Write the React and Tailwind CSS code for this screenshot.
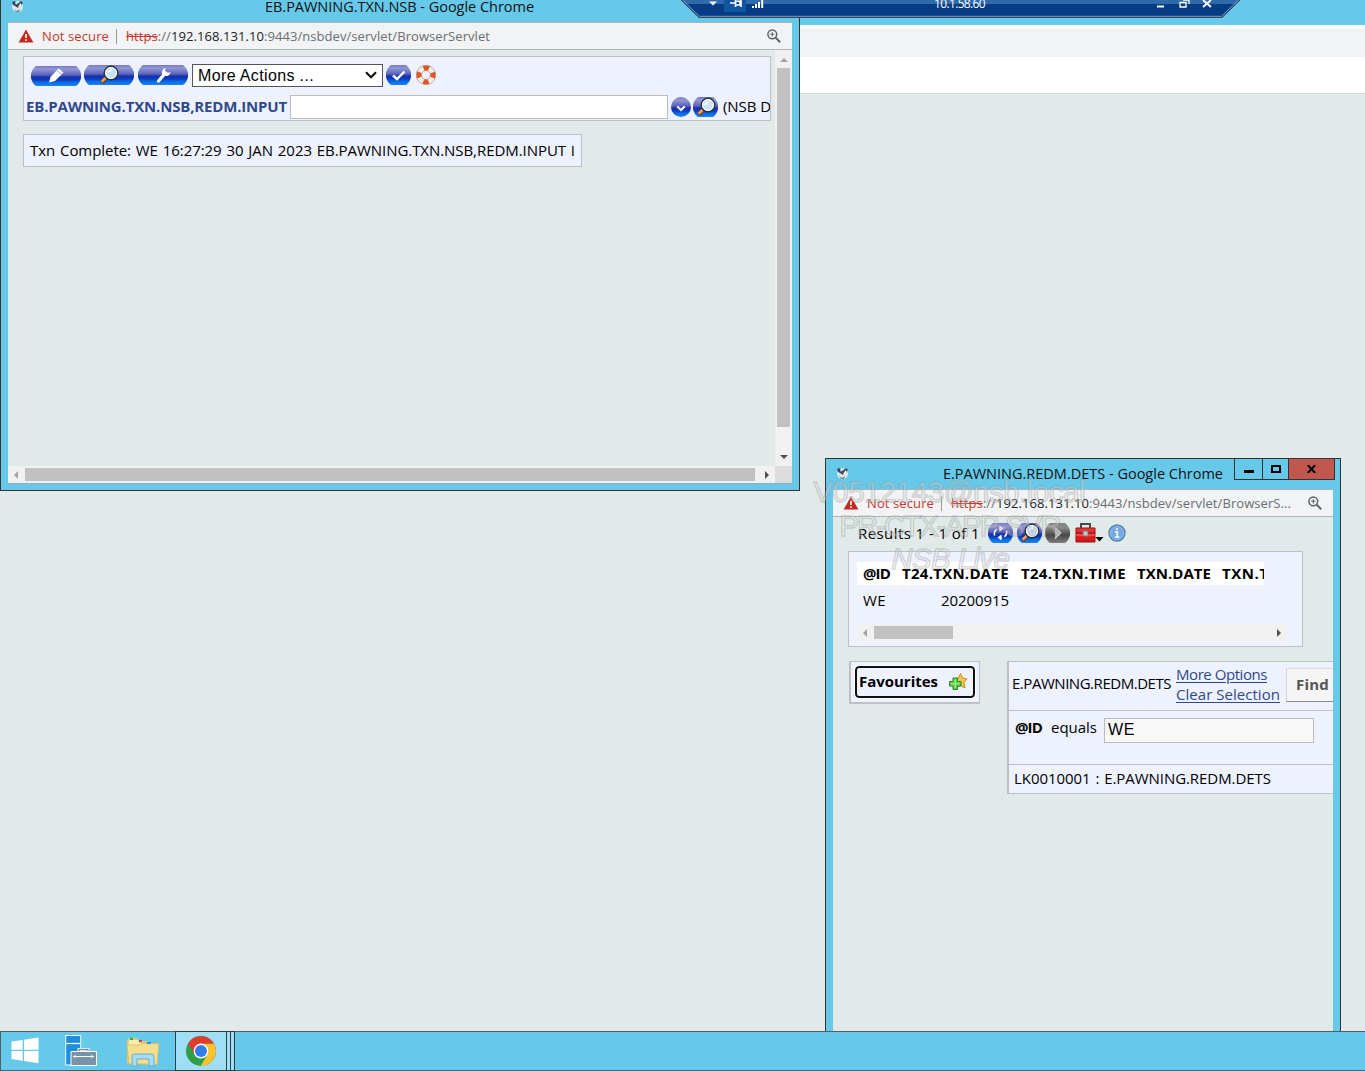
import { useLayoutEffect, useRef } from "react";

const UI = "font-['Open_Sans',sans-serif]";
const PAGE = "font-['Open_Sans','Noto_Sans',sans-serif]";

/* One line of text whose tracking is adjusted so that it fills its box. */
function Fit({ className = "", children }) {
  const box = useRef(null);
  const run = useRef(null);
  useLayoutEffect(() => {
    const text = run.current;
    text.style.letterSpacing = "0px";
    const natural = text.getBoundingClientRect().width;
    const gap = box.current.getBoundingClientRect().width - natural;
    text.style.letterSpacing = gap / text.textContent.length + "px";
  }, []);
  return (
    <span ref={box} className={"block shrink-0 whitespace-nowrap " + className}>
      <span ref={run}>{children}</span>
    </span>
  );
}

function Defs() {
  return (
    <svg className="absolute h-0 w-0">
      <defs>
        <linearGradient id="pill" x1="0" y1="0" x2="0" y2="1">
          <stop offset="0" stopColor="#7478c4" />
          <stop offset=".15" stopColor="#9497d2" />
          <stop offset=".45" stopColor="#5a63bc" />
          <stop offset=".55" stopColor="#1a30a8" />
          <stop offset=".7" stopColor="#0a3cc0" />
          <stop offset=".8" stopColor="#0a66e4" />
          <stop offset="1" stopColor="#1787ee" />
        </linearGradient>
        <linearGradient id="greyPill" x1="0" y1="0" x2="0" y2="1">
          <stop offset="0" stopColor="#7d7d7d" />
          <stop offset=".2" stopColor="#8d8d8d" />
          <stop offset=".5" stopColor="#5c5c5c" />
          <stop offset=".6" stopColor="#464646" />
          <stop offset="1" stopColor="#808080" />
        </linearGradient>
        <linearGradient id="redBox" x1="0" y1="0" x2="0" y2="1">
          <stop offset="0" stopColor="#e83a3a" />
          <stop offset=".5" stopColor="#f02020" />
          <stop offset="1" stopColor="#c41515" />
        </linearGradient>
      </defs>
    </svg>
  );
}

function Pill({ w, fill = "url(#pill)", className = "", children }) {
  return (
    <svg width={w} height="20" viewBox={`0 0 ${w} 20`} className={"block shrink-0 " + className}>
      <path
        d={`M5 0H${w - 5}Q${w - 1} 3 ${w} 8V12Q${w - 1} 17 ${w - 5} 20H5Q1 17 0 12V8Q1 3 5 0Z`}
        fill={fill}
      />
      {children}
    </svg>
  );
}

function Lens({ x }) {
  return (
    <g transform={`translate(${x} 0)`}>
      <path d="M6 13L1.5 17.5" stroke="#7a3d18" strokeWidth="4.4" />
      <path d="M5.6 12.8L1.7 16.7" stroke="#f0a263" strokeWidth="2.6" />
      <circle cx="11" cy="8" r="6.8" fill="#c9e3f8" stroke="#26303c" strokeWidth="1.4" />
      <circle cx="11" cy="8" r="5.5" fill="none" stroke="#fff" strokeWidth="1" />
      <path d="M8 8Q9 5 12 5" stroke="#fff" strokeWidth="1.4" fill="none" />
    </g>
  );
}

function Lifebuoy() {
  return (
    <svg width="20" height="20" viewBox="0 0 20 20" className="relative -top-px ml-[5px] block shrink-0">
      <circle cx="10" cy="10" r="7" fill="none" stroke="#8f8783" strokeWidth="6" />
      <circle cx="10" cy="10" r="7" fill="none" stroke="#f3eeea" strokeWidth="4.8" />
      <circle cx="10" cy="10" r="7" fill="none" stroke="#e2561f" strokeWidth="5" strokeDasharray="5.4 5.596" strokeDashoffset="2.7" />
    </svg>
  );
}

function AppGlyph({ className = "" }) {
  return (
    <svg width="13" height="13" viewBox="0 0 13 13" className={"block shrink-0 " + className}>
      <circle cx="6.5" cy="6.5" r="5.5" fill="#dfe7ec" />
      <path d="M1 2L4 1L6 4L10 1L12 3L10 6L8 5L7 8L4 6L2 5Z" fill="#33495e" />
      <path d="M4 2L6 3L5 5Z M9 3L11 5L8 7Z" fill="#fff" />
      <path d="M3 9L6 11L9 9L8 12L5 12Z" fill="#75828c" />
    </svg>
  );
}

function Warning() {
  return (
    <svg width="16" height="14" viewBox="0 0 16 14" className="block shrink-0">
      <path d="M8 .5L15.4 13.5H.6Z" fill="#c5281c" />
      <path d="M8 5V9M8 10.3V12" stroke="#fff" strokeWidth="1.6" />
    </svg>
  );
}

function ZoomGlyph({ className = "" }) {
  return (
    <svg width="14" height="14" viewBox="0 0 14 14" className={"block shrink-0 " + className} fill="none" stroke="#5f6368">
      <circle cx="5.3" cy="5.3" r="4.4" strokeWidth="1.5" />
      <path d="M8.7 8.7L13.2 13.2" strokeWidth="2" />
      <path d="M5.3 3.2V7.4M3.2 5.3H7.4" strokeWidth="1.1" />
    </svg>
  );
}

function Arrow({ dir, color }) {
  const d = { left: "M6 0V8L2 4Z", right: "M2 0V8L6 4Z", up: "M0 6H8L4 2Z", down: "M0 2H8L4 6Z" }[dir];
  return (
    <svg width="8" height="8" viewBox="0 0 8 8" className="block shrink-0">
      <path d={d} fill={color} />
    </svg>
  );
}

function AddressBar({ url, zoomClass }) {
  return (
    <div className={"flex h-[28px] shrink-0 items-center border-y border-[#b0b2b5] bg-[#f1f3f4] pl-[10px] text-[13px] " + UI}>
      <Warning />
      <Fit className="ml-2 mt-[2px] w-[67px] text-[#c8372d]">Not secure</Fit>
      <span className="ml-[7px] h-[15px] w-px bg-[#999]" />
      {url}
      <ZoomGlyph className={zoomClass} />
    </div>
  );
}

function TransactionWindow() {
  return (
    <section className="absolute left-0 top-0 flex h-[491px] w-[800px] flex-col border border-t-0 border-[#333] bg-[#66c9ea] px-[7px]">
      <header className={"flex h-[22px] shrink-0 items-start text-[14.5px] leading-[14px] text-[#111] " + UI}>
        <AppGlyph className="ml-[3px]" />
        <Fit className="ml-[241px] w-[269px]">EB.PAWNING.TXN.NSB - Google Chrome</Fit>
      </header>
      <AddressBar
        zoomClass="ml-auto mr-[11px]"
        url={
          <Fit className="ml-[9px] mt-[2px] w-[364px] text-[#6b6e72]">
            <span className="text-[#c8372d] line-through">https</span>://
            <span className="text-[#202124]">192.168.131.10</span>:9443/nsbdev/servlet/BrowserServlet
          </Fit>
        }
      />
      <div className="flex h-[416px] shrink-0 bg-[#e1eae8]">
        <div className={"w-[767px] pl-[15px] pt-[6px] text-[15px] " + PAGE}>
          <div className="h-[65px] w-[748px] overflow-hidden border border-[#bdbfc3] bg-[#eef2ff]">
            <div className="flex h-[38px] items-center pl-[7px]">
              <Pill w={50}>
                <path d="M18 16.5L19.5 11L27.5 2.5L32.5 6.5L24 15Z" fill="#fff" />
                <path d="M26 4.5L31 8.5" stroke="#9aa3da" />
              </Pill>
              <Pill w={50} className="relative -top-px ml-[3px]"><Lens x={16} /></Pill>
              <Pill w={50} className="relative -top-px ml-1">
                <path d="M20.5 16L27 8.5" stroke="#fff" strokeWidth="3.2" strokeLinecap="round" />
                <path d="M27.5 3A4.4 4.4 0 0 0 24.5 9.5A4.6 4.6 0 0 0 32.5 7.2L29.5 7.8L27 5.8Z" fill="#fff" />
              </Pill>
              <div className="relative -top-px ml-1 flex h-[23px] w-[191px] shrink-0 items-center border border-[#555] bg-white pl-[5px] font-['Liberation_Sans',sans-serif] text-[16px] text-black">
                <Fit className="mt-[2px] w-[116px]">More Actions ...</Fit>
                <svg width="12" height="8" viewBox="0 0 12 8" className="ml-auto mr-[5px]">
                  <path d="M1 1.2L6 6.2L11 1.2" fill="none" stroke="#111" strokeWidth="2.2" />
                </svg>
              </div>
              <Pill w={25} className="relative -top-px ml-[3px]">
                <path d="M7 10.5L11 14L18.5 6.5" fill="none" stroke="#fff" strokeWidth="2.4" />
              </Pill>
              <Lifebuoy />
            </div>
            <div className="flex h-[24px] items-center pl-[2px]">
              <Fit className="-mt-[2px] w-[261px] text-[15px] font-bold text-[#30498a]">EB.PAWNING.TXN.NSB,REDM.INPUT</Fit>
              <div className="ml-[3px] h-[24px] w-[378px] shrink-0 border border-[#bbb] bg-white" />
              <svg width="20" height="20" viewBox="0 0 20 20" className="ml-[3px] block shrink-0">
                <circle cx="10" cy="10" r="10" fill="url(#pill)" />
                <path d="M6.3 9.5L10 13L13.7 9.5" fill="none" stroke="#fff" strokeWidth="2" />
              </svg>
              <Pill w={25} className="ml-[2px]"><Lens x={4} /></Pill>
              <Fit className="-mt-[2px] ml-[5px] w-[48px] text-black">(NSB D</Fit>
            </div>
          </div>
          <div className="mt-[13px] flex h-[33px] w-[559px] items-center border border-[#bdbfc3] bg-[#eef2ff] pl-[6px] text-black">
            <Fit className="w-[545px] [word-spacing:1px]">Txn Complete: WE 16:27:29 30 JAN 2023 EB.PAWNING.TXN.NSB,REDM.INPUT I</Fit>
          </div>
        </div>
        <div className="flex w-[17px] flex-col items-center bg-[#f1f1f1] py-[5px]">
          <div className="mt-px"><Arrow dir="up" color="#a3a3a3" /></div>
          <div className="mt-1 h-[359px] w-[13px] bg-[#c1c1c1]" />
          <div className="mt-auto"><Arrow dir="down" color="#505050" /></div>
        </div>
      </div>
      <div className="flex h-[17px] shrink-0 items-center bg-[#f1f1f1] pl-1">
        <Arrow dir="left" color="#a3a3a3" />
        <div className="ml-[5px] h-[13px] w-[730px] bg-[#c1c1c1]" />
        <div className="ml-[8px]"><Arrow dir="right" color="#505050" /></div>
        <div className="ml-auto h-[17px] w-[17px] bg-[#dcdcdc]" />
      </div>
      <div className="h-px bg-[#85b3c5]" />
    </section>
  );
}

function WindowButtons() {
  return (
    <div className="ml-auto flex h-[21px] w-[101px] border border-t-0 border-[#333]">
      <div className="flex w-[28px] items-center justify-center border-r border-[#333]"><i className="mt-[5px] h-[3px] w-[10px] bg-black" /></div>
      <div className="flex w-[26px] items-center justify-center border-r border-[#333]"><i className="h-[8px] w-[10px] border-2 border-black" /></div>
      <div className="flex flex-1 items-center justify-center bg-[#c1584f]">
        <svg width="9" height="8" viewBox="0 0 9 8"><path d="M.8 0L8.2 8M8.2 0L.8 8" stroke="#000" strokeWidth="2" /></svg>
      </div>
    </div>
  );
}

function EnquiryWindow() {
  return (
    <section className="absolute left-[825px] top-[458px] flex h-[573px] w-[516px] flex-col border border-b-0 border-[#333] bg-[#66c9ea] px-[7px]">
      <header className={"-mr-[2px] flex h-[30px] shrink-0 items-start text-[14.5px] leading-[20px] text-[#111] " + UI}>
        <AppGlyph className="ml-[3px] mt-[8px]" />
        <Fit className="ml-[94px] mt-[5px] w-[280px]">E.PAWNING.REDM.DETS - Google Chrome</Fit>
        <div className="ml-auto"><WindowButtons /></div>
      </header>
      <AddressBar
        zoomClass="ml-auto mr-[11px]"
        url={
          <Fit className="ml-[9px] mt-[2px] w-[340px] text-[#6b6e72]">
            <span className="text-[#c8372d] line-through">https</span>://
            <span className="text-[#202124]">192.168.131.10</span>:9443/nsbdev/servlet/BrowserS...
          </Fit>
        }
      />
      <div className={"flex-1 overflow-hidden bg-[#e1eae8] text-[15px] text-black " + PAGE}>
        <div className="flex h-[33px] items-center pl-[25px]">
          <Fit className="w-[122px]">Results 1 - 1 of 1</Fit>
          <Pill w={25} className="relative -top-px ml-[8px]">
            <path d="M6.5 12.5Q5.5 6 12 5.5M18.5 7.5Q19.5 14 13 14.5" fill="none" stroke="#fff" strokeWidth="1.6" strokeDasharray="7 2.5 10" />
            <path d="M11.5 2.5V8.5L15.5 5.5ZM13.5 11.5V17.5L9.5 14.5Z" fill="#fff" />
          </Pill>
          <Pill w={25} className="relative -top-px ml-1"><Lens x={4} /></Pill>
          <Pill w={25} fill="url(#greyPill)" className="relative -top-px ml-[3px]">
            <path d="M10 4.5L15.5 10L10 15.5" fill="#aaa" stroke="#c8c8c8" strokeWidth="1.6" />
          </Pill>
          <svg width="29" height="20" viewBox="0 0 29 20" className="relative -top-px ml-[5px] block shrink-0">
            <path d="M6 5V1H15V5" fill="none" stroke="#4a4a4a" strokeWidth="2" />
            <path d="M1 5H20V19H1Z" fill="url(#redBox)" stroke="#981010" />
            <path d="M1 10H20" stroke="#7d1010" />
            <path d="M1 12H20" stroke="#ff8c8c" strokeWidth=".8" />
            <rect x="8" y="8" width="5" height="5" fill="#cfc3c3" stroke="#777" />
            <path d="M20.5 14H28.5L24.5 18.5Z" fill="#000" />
          </svg>
          <svg width="18" height="18" viewBox="0 0 18 18" className="relative -top-px ml-1 block shrink-0">
            <circle cx="9" cy="9" r="8" fill="#5f98d6" stroke="#5584b8" strokeWidth="1.4" />
            <circle cx="9" cy="9" r="6.5" fill="#75a9df" stroke="#a3c6ea" strokeWidth=".8" />
            <path d="M9 4V6M7.2 8H9.3V13M7 13.2H11.3" stroke="#e8f2fc" strokeWidth="1.8" fill="none" />
          </svg>
        </div>

        <div className="ml-[15px] mt-px h-[96px] w-[455px] border border-[#bdbfc3] bg-[#eef2ff] pl-[8px] pt-[10px]">
          <div className="flex h-[23px] w-[407px] items-center overflow-hidden bg-white pl-[6px] text-[15px] font-bold">
            <Fit className="w-[27px]">@ID</Fit>
            <Fit className="ml-[12px] w-[107px]">T24.TXN.DATE</Fit>
            <Fit className="ml-[12px] w-[105px]">T24.TXN.TIME</Fit>
            <Fit className="ml-[11px] w-[74px]">TXN.DATE</Fit>
            <Fit className="ml-[11px] w-[76px]">TXN.TIME</Fit>
          </div>
          <div className="flex h-[31px] items-center pl-[6px]">
            <Fit className="w-[23px]">WE</Fit>
            <Fit className="ml-[55px] w-[68px]">20200915</Fit>
          </div>
          <div className="mt-[8px] flex h-[17px] w-[430px] items-center bg-[#f1f1f1] pl-1">
            <Arrow dir="left" color="#a3a3a3" />
            <div className="ml-[5px] h-[13px] w-[79px] bg-[#c1c1c1]" />
            <div className="ml-auto mr-1"><Arrow dir="right" color="#505050" /></div>
          </div>
        </div>

        <div className="mt-[14px] flex items-start">
          <div className="ml-[16px] h-[43px] w-[131px] shrink-0 border-2 border-r border-t border-[#bdbfc3] bg-[#eef2ff] pl-[4px] pt-[4px]">
            <div className="flex h-[32px] w-[120px] items-center rounded-[4px] border-2 border-[#101010] pl-[2px] outline outline-1 outline-white">
              <Fit className="-mt-[2px] w-[79px] text-[15px] font-bold">Favourites</Fit>
              <svg width="20" height="20" viewBox="0 0 20 20" className="ml-[10px] shrink-0">
                <path d="M12.5 1.5L14.8 6L19 7L16 10.5L17 16L12.3 13.5L8 16L8.5 10.5L5.5 7L10.3 6Z" fill="#f6c550" stroke="#c98a1d" />
                <path d="M5 6H9.5V9.5H13V14H9.5V17.5H5V14H1.5V9.5H5Z" fill="#5ed04d" stroke="#218a20" />
                <path d="M7.2 7.5V16M3 11.8H11.5" stroke="#a3f094" strokeWidth="1" />
              </svg>
            </div>
          </div>
          <div className="ml-[27px] w-[326px] shrink-0 border-y border-l-2 border-[#bdbfc3] bg-[#eef2ff]">
            <div className="flex h-[49px] items-center overflow-hidden border-b border-[#bdbfc3] pl-[3px]">
              <Fit className="relative -top-[3px] w-[159px]">E.PAWNING.REDM.DETS</Fit>
              <div className="relative -top-[2px] mb-px ml-[5px] leading-[20px] text-[#30498a] underline underline-offset-2">
                <Fit className="w-[91px]">More Options</Fit>
                <Fit className="w-[104px]">Clear Selection</Fit>
              </div>
              <div className="relative -top-px ml-[6px] h-[34px] w-[60px] shrink-0 border border-b-[#888] border-l-[#d5d5d5] border-t-[#ddd] bg-[#f5f5f5] pl-[9px] pt-[4px] text-[15px] font-bold text-[#555]">
                <Fit className="w-[33px]">Find</Fit>
              </div>
            </div>
            <div className="flex h-[54px] items-start border-b border-[#bdbfc3] pl-[6px]">
              <Fit className="mt-[5px] w-[27px] text-[15px] font-bold">@ID</Fit>
              <Fit className="ml-[9px] mt-[5px] w-[46px]">equals</Fit>
              <div className="ml-[7px] mt-[7px] h-[25px] w-[210px] border border-[#bbb] bg-[#f8f8f8] pl-[3px] font-['Liberation_Sans',sans-serif] text-[16px] leading-[22px]">
                <Fit className="w-[27px]">WE</Fit>
              </div>
            </div>
            <div className="flex h-[28px] items-center pl-[5px]">
              <Fit className="-mt-[2px] w-[257px] [word-spacing:1px]">LK0010001 : E.PAWNING.REDM.DETS</Fit>
            </div>
          </div>
        </div>
      </div>
    </section>
  );
}

function RemoteBar() {
  return (
    <div className="absolute left-[681px] top-0 h-[18px] w-[560px]">
      <svg width="560" height="18" viewBox="0 0 560 18" className="block">
        <path d="M0 0L18 17.5H541L559 0Z" fill="#053c84" />
        <path d="M1 0L5 4H554L558 0Z" fill="#2f6aaa" />
        <path d="M0 0L18 17.5H541L559 0" fill="none" stroke="#3c4653" />
        <path d="M1.5 0L18.5 16.3H540.5L557.5 0" fill="none" stroke="#9cb5d3" strokeWidth=".8" />
        <rect x="43" y="0" width="22" height="12" fill="#0f55a2" />
        <path d="M28 1.5H36L32 5.5Z" fill="#fff" />
        <path d="M49 3H54M54.5 0V7M54 1.3H59V5H54M60 0V7" stroke="#fff" strokeWidth="1.6" fill="none" />
        <path d="M72 6V8M75 4V8M78 2V8M81.2 0V8" stroke="#fff" strokeWidth="2" />
        <path d="M476 6.5H483" stroke="#fff" strokeWidth="2" />
        <path d="M499 2.5H505V7H499ZM502 0H508V4" stroke="#fff" strokeWidth="1.3" fill="none" />
        <path d="M522 0L530 7M530 0L522 7" stroke="#fff" strokeWidth="1.8" />
      </svg>
      <div className="absolute left-[253px] top-[-5px] font-['Open_Sans',sans-serif] text-[12px] leading-[17px] text-white">
        <Fit className="w-[51px]">10.1.58.60</Fit>
      </div>
    </div>
  );
}

function Watermark() {
  return (
    <div className="pointer-events-none absolute left-[813px] top-[475px] flex w-[273px] flex-col items-center font-['Liberation_Sans',sans-serif] text-[29px] leading-[34px] text-[#ffffff40] [-webkit-text-stroke:1.5px_#9090905c]">
      <Fit className="w-[272px]">V0512143@nsb.local</Fit>
      <Fit className="w-[220px]">PR-CTX-APP-SVR</Fit>
      <Fit className="ml-[2px] mt-[-1px] w-[118px] italic">NSB Live</Fit>
    </div>
  );
}

function Taskbar() {
  return (
    <footer className="absolute left-0 top-[1031px] flex h-[40px] w-full border border-r-0 border-[#555f63] bg-[#66c9ea]">
      <svg width="28" height="27" viewBox="0 0 28 27" className="ml-[10px] mt-[5px] block">
        <path d="M.5 4.5L11.7 3V12.7H.5ZM13 2.8L27.5.6V12.7H13ZM.5 14H11.7V23.7L.5 22ZM13 14H27.5V26.3L13 24Z" fill="#fff" />
      </svg>
      <svg width="33" height="34" viewBox="0 0 33 34" className="ml-[26px] mt-[2px] block">
        <path d="M.7 1.5H15.7V31H.7Z" fill="#1f8edb" stroke="#f4fbff" />
        <path d="M1 9.5H15" stroke="#fff" strokeWidth="1.3" />
        <path d="M6 19V17.5H31.5V31.5H6Z" fill="#7892a7" stroke="#fff" />
        <path d="M14 17V15.5H23V17" fill="none" stroke="#fff" strokeWidth="3" />
        <path d="M14 17V15.5H23V17" fill="none" stroke="#7892a7" strokeWidth="1.3" />
        <path d="M8 22.5H29M10 21V24M27 21V24" stroke="#fff" />
      </svg>
      <svg width="34" height="30" viewBox="0 0 34 30" className="ml-[28px] mt-[5px] block">
        <path d="M1 3L3 1H11L13 4H20L22 6H30L32 9V27L28 28L1 26Z" fill="#e5c873" />
        <path d="M3 3H12L14 6H20L22 8H31V12H2Z" fill="#f8ebae" />
        <path d="M1 8H13L16 6.5H33L31 27H3Z" fill="#f6df8c" stroke="#d5b55e" strokeWidth=".7" />
        <path d="M4 2H7" stroke="#22b534" strokeWidth="2" />
        <path d="M13 4H16" stroke="#d13b35" strokeWidth="2" />
        <path d="M21 6H25" stroke="#2295e8" strokeWidth="2" />
        <path d="M6 29V19Q6 17 8 17H26Q28 17 28 19V29H23V22H11V29Z" fill="#a8dcf3" stroke="#66add3" />
      </svg>
      <div className="-my-px ml-[15px] flex h-[40px] w-[60px] border border-[#303d42] bg-[#9fdef5]">
        <svg width="30" height="30" viewBox="0 0 30 30" className="ml-[10px] mt-[4px] block shrink-0">
          <circle cx="15" cy="15" r="15" fill="#2e9e4b" />
          <path d="M2 7.5L9 19L15 8H28A15 15 0 0 0 2 7.5Z" fill="#e23b2e" />
          <path d="M15 7.8H28.1A15 15 0 0 1 14.7 30L21.5 18.5Z" fill="#fcc12d" />
          <circle cx="15" cy="15" r="7.4" fill="#fff" />
          <circle cx="15" cy="15" r="6" fill="#327cec" />
        </svg>
        <div className="ml-[10px] w-[5px] border-x border-[#303d42]" />
      </div>
    </footer>
  );
}

export default function App() {
  return (
    <main className="relative h-[1071px] w-[1365px] overflow-hidden bg-[#e1eae8]">
      <Defs />
      <div className="ml-[800px]">
        <div className="h-[25px] bg-[#66c9ea]" />
        <div className="h-1 bg-white" />
        <div className="h-[28px] bg-[#f1f3f4]" />
        <div className="h-[37px] border-b border-[#d3dcda] bg-white" />
      </div>
      <TransactionWindow />
      <RemoteBar />
      <EnquiryWindow />
      <Watermark />
      <Taskbar />
    </main>
  );
}
